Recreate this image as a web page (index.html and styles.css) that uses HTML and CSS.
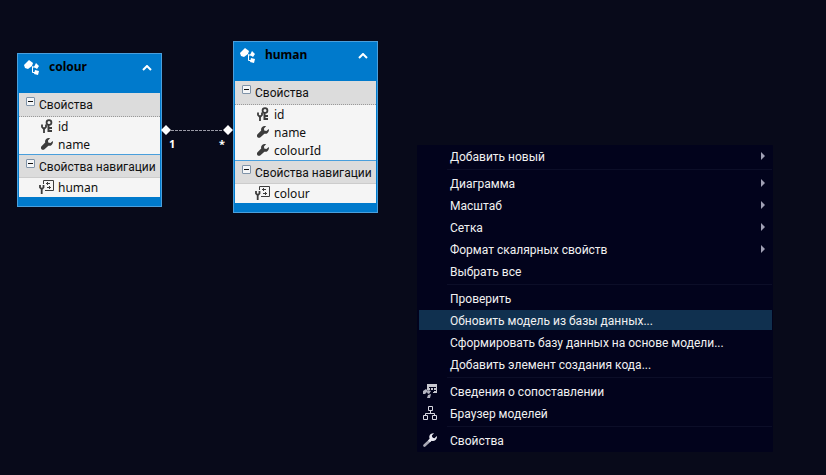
FILE: index.html
```html
<!DOCTYPE html>
<html lang="ru">
<head>
  <meta charset="UTF-8" />
  <meta name="viewport" content="width=device-width, initial-scale=1.0" />
  <title>Модель данных</title>
  <link rel="stylesheet" href="styles.css">
</head>
<body>
  <!-- Общие значки -->
  <svg class="sprite" aria-hidden="true">
    <symbol id="i-entity" viewBox="0 0 16 16">
      <path d="M0 5 5 0l4 3-1 3-4 3-3-1z" fill="#fff"/>
      <path d="M8 7h4M8.500 6.500v6H11" fill="none" stroke="#fff"/>
      <path d="M12 3l3 3-2 3-3-2zM11 10l4 1-1 4-4-1z" fill="#fff"/>
    </symbol>
    <symbol id="i-up" viewBox="0 0 10 6">
      <path d="M1 5l4-4 4 4" fill="none" stroke="#fff" stroke-width="2"/>
    </symbol>
    <symbol id="i-wrench" viewBox="0 0 12 12">
      <path d="M11.800 3 9.400 5 7.200 4.600 7 2.500 9.200 0C7-.3 5 .5 4.300 2.300c-.3.800-.3 1.500-.1 2.200L.5 8.200c-.8.800-.8 2.200 0 3s2.200.8 3 0l3.900-3.500c1.200.3 2.400 0 3.200-.8 1.200-1 1.600-2.600 1.200-3.900z" fill="currentColor"/>
    </symbol>
    <symbol id="i-key" viewBox="0 0 12 14">
      <circle cx="8" cy="3.500" r="2.400" fill="none" stroke="#3c3c3c" stroke-width="1.800"/>
      <path d="M7.500 6v7M7 9h4M7 12h4" fill="none" stroke="#3c3c3c" stroke-width="2"/>
      <path d="M1 5.500V8l1.500 1.500h1L5 8V5.500M3 9v5" fill="none" stroke="#3c3c3c" stroke-width="1.800"/>
    </symbol>
    <symbol id="i-nav" viewBox="0 0 15 14">
      <path d="M4.500 4V.5h10v10H6" fill="none" stroke="#3c3c3c"/>
      <path d="M7 3.500h4M8.500 2v3M8 7.500h4M10.500 6v3" fill="none" stroke="#3c3c3c"/>
      <path d="M1 5v2.500L2.500 9h.5l1.500-1.500V5M2.700 9v5" fill="none" stroke="#3c3c3c" stroke-width="1.800"/>
    </symbol>
  </svg>

  <main class="diagram">
    <section class="entity entity-colour">
      <header class="entity-head">
        <svg class="entity-icon"><use href="#i-entity"/></svg>
        <h2>colour</h2>
        <button class="collapse" aria-label="Свернуть"><svg><use href="#i-up"/></svg></button>
      </header>
      <h3><button class="toggle" aria-label="Свернуть свойства"></button>Свойства</h3>
      <ul>
        <li><svg class="key"><use href="#i-key"/></svg>id</li>
        <li><svg><use href="#i-wrench"/></svg>name</li>
      </ul>
      <h3 class="nav"><button class="toggle" aria-label="Свернуть навигацию"></button>Свойства навигации</h3>
      <ul>
        <li><svg class="wide"><use href="#i-nav"/></svg>human</li>
      </ul>
    </section>

    <div class="link">
      <svg viewBox="0 0 72 12">
        <path d="M10 6.500h52" stroke="#9a9aa6" stroke-dasharray="3 1"/>
        <path d="M5 1l5 5-5 5-5-5zM67 1l5 5-5 5-5-5z" fill="#fff"/>
      </svg>
      <span>1</span><span>*</span>
    </div>

    <section class="entity entity-human">
      <header class="entity-head">
        <svg class="entity-icon"><use href="#i-entity"/></svg>
        <h2>human</h2>
        <button class="collapse" aria-label="Свернуть"><svg><use href="#i-up"/></svg></button>
      </header>
      <h3><button class="toggle" aria-label="Свернуть свойства"></button>Свойства</h3>
      <ul>
        <li><svg class="key"><use href="#i-key"/></svg>id</li>
        <li><svg><use href="#i-wrench"/></svg>name</li>
        <li><svg><use href="#i-wrench"/></svg>colourId</li>
      </ul>
      <h3 class="nav"><button class="toggle" aria-label="Свернуть навигацию"></button>Свойства навигации</h3>
      <ul>
        <li><svg class="wide"><use href="#i-nav"/></svg>colour</li>
      </ul>
    </section>

    <!-- Контекстное меню -->
    <nav class="menu">
      <button class="sub">Добавить новый</button>
      <hr>
      <button class="sub">Диаграмма</button>
      <button class="sub">Масштаб</button>
      <button class="sub">Сетка</button>
      <button class="sub">Формат скалярных свойств</button>
      <button>Выбрать все</button>
      <hr>
      <button>Проверить</button>
      <button class="active">Обновить модель из базы данных...</button>
      <button>Сформировать базу данных на основе модели...</button>
      <button>Добавить элемент создания кода...</button>
      <hr>
      <button>
        <svg viewBox="0 0 14 14">
          <path d="M4 0h10v9h-4V6H4z" fill="#c8c8d0"/>
          <path d="M6 3.500h7M8 6.500h5M7.500 3v3M10.500 3v5" stroke="#04051e"/>
          <path d="M0 7l3-2 2 2-3 3H0zM5 6l3 1-2 3-2-1zM5 11l3-1-1 4H4z" fill="#b4b4c0"/>
        </svg>Сведения о сопоставлении</button>
      <button>
        <svg viewBox="0 0 14 14">
          <path d="M5.500.5h4v4h-4zM.5 9.500h4v4h-4zM9.500 9.500h4v4h-4zM7.500 4.500v3M2.500 9V7.500h9V9" fill="none" stroke="#d8d8e0"/>
        </svg>Браузер моделей</button>
      <hr>
      <button><svg viewBox="0 0 14 14">
          <path d="M1.500 12.500 9 5.500" stroke="#a8a8b4" stroke-width="2.600" stroke-linecap="round"/>
          <path d="M13.800 3 11.500 5.200 9.300 4.800 8.900 2.600 11 .3C9 0 7 1 6.400 3c-.3 1.200 0 2.200.3 2.800L5 7.500 7 9.300l1.600-1.500c1.300.5 2.800.3 4-.7 1.200-1.100 1.600-2.700 1.200-4.100z" fill="#e8e8f0"/>
        </svg>Свойства</button>
    </nav>
  </main>
</body>
</html>
```
FILE: styles.css
```css
* {
  box-sizing: border-box;
}

body {
  margin: 0;
  background-color: #080a1a;
  font-family: Roboto, "Noto Sans", sans-serif;
  font-size: 12px;
}

button {
  padding: 0;
  border: none;
  background: none;
  font: inherit;
  color: inherit;
}

.sprite {
  position: absolute;
  width: 0;
  height: 0;
}

.diagram {
  position: relative;
  min-height: 100vh;
  overflow: hidden;
}

/* Сущности */
.entity {
  position: absolute;
  width: 145px;
  padding: 0 1px 9px;
  border: 1px solid #4a9fdc;
  background-color: #007acc;
  color: #111;
}
.entity-colour {
  left: 17px;
  top: 53px;
}
.entity-human {
  left: 233px;
  top: 41px;
}

.entity-head {
  display: flex;
  align-items: flex-start;
  height: 39px;
  padding: 4px 8px 0 5px;
}
.entity-icon {
  width: 16px;
  height: 16px;
  margin-top: 2px;
}
.entity-head h2 {
  flex: 1;
  margin: 0 0 0 9px;
  font-family: "Noto Sans", sans-serif;
  font-size: 12px;
  line-height: 17px;
  color: #000;
}
.collapse {
  padding-top: 7px;
}
.collapse svg {
  display: block;
  width: 10px;
  height: 6px;
}

.entity h3 {
  display: flex;
  gap: 4px;
  height: 24px;
  margin: 0;
  padding-left: 7px;
  border-bottom: 1px dotted #999;
  background-color: #dcdcdc;
  font-size: 12px;
  font-weight: normal;
  line-height: 24px;
  white-space: nowrap;
}
.entity h3.nav {
  border-top: 1px solid #4a9fdc;
  border-bottom: 1px solid #ccc;
}

.toggle {
  display: flex;
  align-items: center;
  width: 9px;
  height: 9px;
  margin-top: 4px;
  padding: 0 1px;
  border: 1px solid #7f93a8;
  border-radius: 1px;
  background-color: #f4f6f8;
}
.toggle::before {
  content: "";
  width: 5px;
  height: 1px;
  background-color: #111;
}

.entity ul {
  margin: 0;
  padding: 0 0 1px;
  background-color: #f5f5f5;
  font-family: "Noto Sans", sans-serif;
  list-style: none;
}
.entity li {
  display: flex;
  align-items: center;
  height: 18px;
  padding-left: 20px;
  color: #111;
}
.entity li svg {
  width: 12px;
  height: 12px;
  margin: 0 5px 0 2px;
  color: #3c3c3c;
}
.entity li svg.key {
  height: 14px;
}
.entity li svg.wide {
  width: 15px;
  height: 14px;
  margin: 0 4px 0 0;
}

/* Связь */
.link {
  position: absolute;
  left: 161px;
  top: 124px;
  display: flex;
  flex-wrap: wrap;
  justify-content: space-between;
  width: 72px;
  padding: 0 8px;
  color: #fff;
  font-family: "Noto Sans", sans-serif;
  font-size: 11px;
  font-weight: bold;
  line-height: 15px;
}
.link svg {
  width: 72px;
  height: 12px;
  margin: 0 -8px;
}

/* Меню */
.menu {
  position: absolute;
  left: 417px;
  top: 145px;
  display: flex;
  flex-direction: column;
  gap: 2px;
  width: 356px;
  padding: 1px 1px 2px 2px;
  border-radius: 1px;
  background-color: #02031c;
  color: #f1f1f1;
}
.menu button {
  position: relative;
  height: 20px;
  padding-left: 31px;
  line-height: 22px;
  text-align: left;
  white-space: nowrap;
}
.menu button:hover,
.menu .active {
  background-color: #10304f;
}
.menu svg {
  position: absolute;
  left: 4px;
  top: 3px;
  width: 14px;
  height: 14px;
}
.menu .sub::after {
  content: "";
  position: absolute;
  right: 7px;
  top: 6px;
  border: 4px solid transparent;
  border-left-color: #a0a0b4;
  border-right: none;
}
.menu hr {
  width: 325px;
  height: 1px;
  margin: 1px 0 1px auto;
  border: none;
  background-color: #0c0e28;
}
```
